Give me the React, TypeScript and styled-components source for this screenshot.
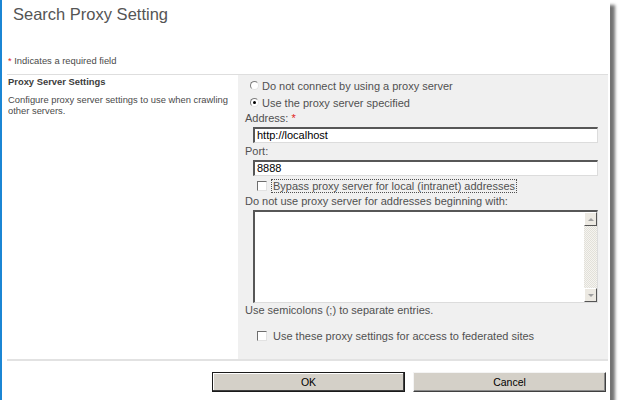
import styled, { createGlobalStyle } from "styled-components";

const GlobalStyle = createGlobalStyle`
  html, body {
    margin: 0;
    padding: 0;
    background: #ffffff;
  }
  body {
    font-family: "Liberation Sans", Arial, sans-serif;
    color: #4f4f4f;
  }
`;

const Dialog = styled.div`
  box-sizing: border-box;
  width: 610px;
  height: 400px;
  background: #ffffff;
  border-left: 2px solid #1b86d4;
  box-shadow: 5px 5px 3px rgba(0, 0, 0, 0.55);
  display: flex;
  flex-direction: column;
`;

const Header = styled.div`
  box-sizing: border-box;
  height: 74px;
  padding: 4px 0 0 11px;
  display: flex;
  flex-direction: column;
`;

const Title = styled.h1`
  margin: 0;
  font-size: 16.5px;
  line-height: 20px;
  font-weight: normal;
  color: #555555;
`;

const RequiredNote = styled.div`
  margin: 31px 0 0 -5px;
  font-size: 9.4px;
  line-height: 12px;
  color: #4a4a4a;
`;

const Star = styled.span`
  color: #e21b1b;
`;

const Section = styled.div`
  display: grid;
  grid-template-columns: 231px 1fr;
  height: 284px;
  margin: 0 2px 0 5px;
  border-top: 1px solid #dedede;
  border-bottom: 2px solid #e2e2e2;
`;

const Description = styled.div`
  padding: 1px 6px 0 1px;
  font-size: 9.4px;
  color: #4a4a4a;
`;

const SectionTitle = styled.div`
  font-weight: bold;
  line-height: 12px;
  color: #3c3c3c;
`;

const SectionText = styled.div`
  margin-top: 7px;
  line-height: 10.5px;
`;

const Panel = styled.div`
  background: #f0f0f0;
  padding: 3px 10px 0 7px;
  display: flex;
  flex-direction: column;
  font-size: 11px;
  color: #505050;
`;

const RadioRow = styled.label`
  display: flex;
  align-items: center;
  gap: 3px;
  height: 17px;
  line-height: 17px;
  padding-left: 5px;
`;

const RadioDot = styled.span<{ $checked?: boolean }>`
  box-sizing: border-box;
  position: relative;
  width: 9px;
  height: 9px;
  margin-top: -2px;
  border-radius: 50%;
  background: #ffffff;
  border: 1px solid;
  border-color: #7c7c7c #e4e4e4 #e4e4e4 #7c7c7c;
  &::after {
    content: "";
    display: ${(p) => (p.$checked ? "block" : "none")};
    position: absolute;
    left: 2px;
    top: 2px;
    width: 3px;
    height: 3px;
    border-radius: 50%;
    background: #000000;
  }
`;

const FieldLabel = styled.div<{ $gap?: number }>`
  line-height: 13px;
  margin-top: ${(p) => p.$gap ?? 0}px;
`;

const TextBox = styled.div<{ $gap?: number }>`
  box-sizing: border-box;
  width: 345px;
  height: 16px;
  margin: ${(p) => p.$gap ?? 2}px 0 0 8px;
  padding: 0 2px;
  background: #ffffff;
  border-style: solid;
  border-width: 2px 1px 1px 2px;
  border-color: #575757 #dcdcdc #dcdcdc #575757;
  color: #000000;
  font-size: 11px;
  line-height: 13px;
`;

const CheckRow = styled.label<{ $gap: number }>`
  display: flex;
  align-items: center;
  gap: 4px;
  height: 14px;
  margin: ${(p) => p.$gap}px 0 0 12px;
`;

const CheckBox = styled.span`
  box-sizing: border-box;
  width: 10px;
  height: 10px;
  background: #ffffff;
  border: 1px solid;
  border-color: #6e6e6e #e2e2e2 #e2e2e2 #6e6e6e;
`;

const CheckText = styled.span<{ $focused?: boolean }>`
  line-height: 12px;
  padding: 0 1px;
  border: 1px dotted ${(p) => (p.$focused ? "#505050" : "transparent")};
`;

const TextAreaFrame = styled.div`
  box-sizing: border-box;
  display: flex;
  width: 345px;
  height: 93px;
  margin: 2px 0 0 8px;
  background: #ffffff;
  border-style: solid;
  border-width: 2px 1px 1px 2px;
  border-color: #575757 #dcdcdc #dcdcdc #575757;
`;

const TextArea = styled.textarea`
  flex: 1;
  border: none;
  outline: none;
  resize: none;
  background: transparent;
  font-family: inherit;
  font-size: 11px;
`;

const ScrollBar = styled.div`
  width: 13px;
  display: flex;
  flex-direction: column;
  justify-content: space-between;
  background: repeating-conic-gradient(#f5f4f0 0 25%, #e2e0d9 0 50%) 0 0 /
    2px 2px;
`;

const ScrollButton = styled.div<{ $down?: boolean }>`
  box-sizing: border-box;
  height: 14px;
  display: flex;
  align-items: center;
  justify-content: center;
  background: #ece9e2;
  border: 1px solid;
  border-color: #ffffff #555555 #555555 #ffffff;
  &::before {
    content: "";
    width: 0;
    height: 0;
    border-left: 3px solid transparent;
    border-right: 3px solid transparent;
    ${(p) =>
      p.$down
        ? "border-top: 3px solid #a0a0a0;"
        : "border-bottom: 3px solid #a0a0a0;"}
  }
`;

const ButtonBar = styled.div`
  display: flex;
  justify-content: flex-end;
  gap: 8px;
  padding: 11px 4px 0 0;
`;

const Button = styled.button<{ $primary?: boolean }>`
  box-sizing: border-box;
  width: 193px;
  height: 20px;
  padding: 0;
  background: #d4d0c8;
  font-family: "Liberation Sans", Arial, sans-serif;
  font-size: 10.5px;
  color: #000000;
  border: 1px solid;
  border-color: ${(p) =>
    p.$primary ? "#1a1a1a" : "#f4f4f4 #404040 #404040 #f4f4f4"};
  box-shadow: ${(p) =>
    p.$primary
      ? "inset -1px -1px 0 #404040, inset 1px 1px 0 #ffffff"
      : "inset -1px -1px 0 #8a8a8a"};
`;

export default function App() {
  return (
    <>
      <GlobalStyle />
      <Dialog>
        <Header>
          <Title>Search Proxy Setting</Title>
          <RequiredNote>
            <Star>*</Star> Indicates a required field
          </RequiredNote>
        </Header>
        <Section>
          <Description>
            <SectionTitle>Proxy Server Settings</SectionTitle>
            <SectionText>
              Configure proxy server settings to use when crawling other
              servers.
            </SectionText>
          </Description>
          <Panel>
            <RadioRow>
              <RadioDot />
              Do not connect by using a proxy server
            </RadioRow>
            <RadioRow>
              <RadioDot $checked />
              Use the proxy server specified
            </RadioRow>
            <FieldLabel>
              Address: <Star>*</Star>
            </FieldLabel>
            <TextBox>http://localhost</TextBox>
            <FieldLabel $gap={2}>Port:</FieldLabel>
            <TextBox>8888</TextBox>
            <CheckRow $gap={3}>
              <CheckBox />
              <CheckText $focused>
                Bypass proxy server for local (intranet) addresses
              </CheckText>
            </CheckRow>
            <FieldLabel $gap={2}>
              Do not use proxy server for addresses beginning with:
            </FieldLabel>
            <TextAreaFrame>
              <TextArea />
              <ScrollBar>
                <ScrollButton />
                <ScrollButton $down />
              </ScrollBar>
            </TextAreaFrame>
            <FieldLabel $gap={1}>Use semicolons (;) to separate entries.</FieldLabel>
            <CheckRow $gap={12}>
              <CheckBox />
              <CheckText>
                Use these proxy settings for access to federated sites
              </CheckText>
            </CheckRow>
          </Panel>
        </Section>
        <ButtonBar>
          <Button $primary>OK</Button>
          <Button>Cancel</Button>
        </ButtonBar>
      </Dialog>
    </>
  );
}
